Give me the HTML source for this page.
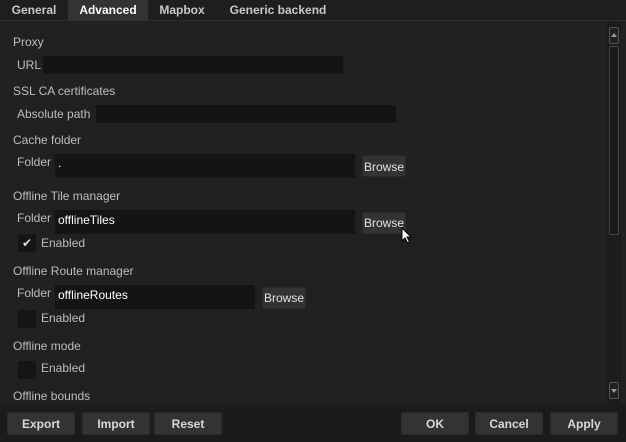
<!DOCTYPE html>
<html><head><style>
*{margin:0;padding:0;box-sizing:border-box}
body{width:626px;height:442px;background:#212121;font-family:"Liberation Sans",sans-serif;font-size:12px;color:#c8c8c8;position:relative;overflow:hidden}
.a{position:absolute}
.tabs{left:0;top:0;width:626px;height:21px;background:#1e1e1e;border-bottom:1px solid #2c2c2c}
.tab{top:0;height:21px;line-height:21px;font-weight:bold;color:#c8c8c8;text-align:center}
.lbl{color:#bdbdbd;line-height:14px}
.in{background:#141414;color:#fff;padding-left:3px}
.btn{background:#333;border:1px solid #2a2a2a;border-radius:2px;color:#d8d8d8;text-align:center;font-weight:bold}
.br{font-weight:normal;color:#e0e0e0}
.cb{background:#151515;width:18px;height:18px}
</style></head><body>
<div class="a tabs"></div>
<div class="a tab" style="left:4px;width:60px">General</div>
<div class="a tab" style="left:68px;width:80px;background:#333;color:#fff;border-radius:2px 2px 0 0">Advanced</div>
<div class="a tab" style="left:152px;width:60px">Mapbox</div>
<div class="a tab" style="left:224px;width:108px">Generic backend</div>

<div class="a lbl" style="left:13px;top:35px">Proxy</div>
<div class="a lbl" style="left:17px;top:58px">URL</div>
<div class="a in" style="left:43px;top:56px;width:300px;height:18px"></div>
<div class="a lbl" style="left:13px;top:84px">SSL CA certificates</div>
<div class="a lbl" style="left:17px;top:107px">Absolute path</div>
<div class="a in" style="left:96px;top:105px;width:300px;height:18px"></div>

<div class="a lbl" style="left:13px;top:133px">Cache folder</div>
<div class="a lbl" style="left:17px;top:155px">Folder</div>
<div class="a in" style="left:55px;top:154px;width:300px;height:24px;line-height:18px">.</div>
<div class="a btn br" style="left:362px;top:155px;width:44px;height:22px;line-height:22px">Browse</div>

<div class="a lbl" style="left:13px;top:189px">Offline Tile manager</div>
<div class="a lbl" style="left:17px;top:211px">Folder</div>
<div class="a in" style="left:55px;top:210px;width:300px;height:24px;line-height:20px">offlineTiles</div>
<div class="a btn br" style="left:362px;top:212px;width:44px;height:22px;line-height:20px">Browse</div>
<div class="a cb" style="left:18px;top:234px;color:#ddd;text-align:center;line-height:18px;font-size:12px">✔</div>
<div class="a lbl" style="left:41px;top:236px">Enabled</div>

<div class="a lbl" style="left:13px;top:264px">Offline Route manager</div>
<div class="a lbl" style="left:17px;top:286px">Folder</div>
<div class="a in" style="left:55px;top:285px;width:200px;height:24px;line-height:20px">offlineRoutes</div>
<div class="a btn br" style="left:262px;top:287px;width:44px;height:22px;line-height:20px">Browse</div>
<div class="a cb" style="left:18px;top:310px"></div>
<div class="a lbl" style="left:41px;top:311px">Enabled</div>

<div class="a lbl" style="left:13px;top:339px">Offline mode</div>
<div class="a cb" style="left:18px;top:361px"></div>
<div class="a lbl" style="left:41px;top:361px">Enabled</div>
<div class="a lbl" style="left:13px;top:389px">Offline bounds</div>

<div class="a" style="left:607px;top:22px;width:14px;height:383px;background:#1c1c1c"></div>
<div class="a" style="left:609px;top:27px;width:10px;height:17px;border:1px solid #555;border-radius:2px;background:#202020"></div>
<div class="a" style="left:611px;top:33px;width:0;height:0;border-left:3px solid transparent;border-right:3px solid transparent;border-bottom:4px solid #999"></div>
<div class="a" style="left:609px;top:46px;width:10px;height:189px;border:1px solid #444;border-radius:2px;background:#1a1a1a"></div>
<div class="a" style="left:609px;top:382px;width:10px;height:17px;border:1px solid #555;border-radius:2px;background:#202020"></div>
<div class="a" style="left:611px;top:389px;width:0;height:0;border-left:3px solid transparent;border-right:3px solid transparent;border-top:4px solid #999"></div>

<div class="a" style="left:0;top:405px;width:626px;height:37px;background:#1b1b1b"></div>
<div class="a btn" style="left:7px;top:412px;width:68px;height:23px;line-height:23px">Export</div>
<div class="a btn" style="left:82px;top:412px;width:68px;height:23px;line-height:23px">Import</div>
<div class="a btn" style="left:154px;top:412px;width:68px;height:23px;line-height:23px">Reset</div>
<div class="a btn" style="left:401px;top:412px;width:68px;height:23px;line-height:23px">OK</div>
<div class="a btn" style="left:475px;top:412px;width:68px;height:23px;line-height:23px">Cancel</div>
<div class="a btn" style="left:550px;top:412px;width:68px;height:23px;line-height:23px">Apply</div>

<svg class="a" style="left:401px;top:227px" width="12" height="18" viewBox="0 0 12 18"><path d="M1 1 L1 14 L4 11 L6.5 16 L8.5 15 L6 10 L10 10 Z" fill="#fff" stroke="#000" stroke-width="1"/></svg>
</body></html>
